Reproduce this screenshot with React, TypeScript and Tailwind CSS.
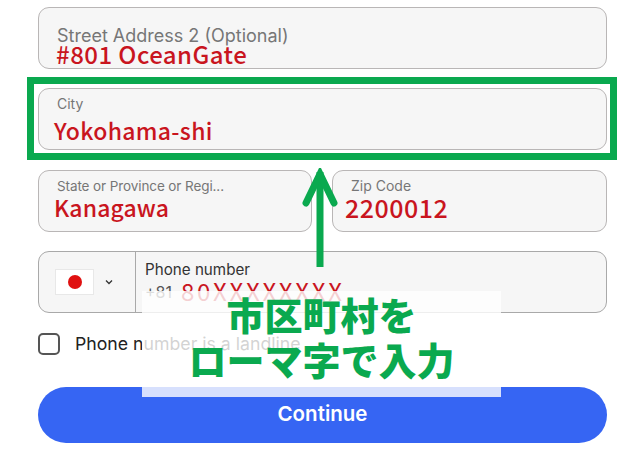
import React from "react";

const labelFont = "font-['Inter','Liberation_Sans',sans-serif]";
const markFont = "font-['Noto_Sans_CJK_JP','Noto_Sans',sans-serif]";

type FieldProps = {
  label: string;
  value: string;
  labelClass: string;
  valueClass: string;
  className?: string;
};

const Field: React.FC<FieldProps> = ({label, value, labelClass, valueClass, className}) => {
  return (
    <div className={`flex h-[62px] flex-col rounded-[11px] border border-[#b9b6b6] bg-[#f6f6f6] ${className ?? ""}`}>
      <p className={`${labelFont} whitespace-nowrap text-[#767676] ${labelClass}`}>{label}</p>
      <p className={`${markFont} whitespace-nowrap text-[#c9151e] ${valueClass}`}>{value}</p>
    </div>
  );
};

export default function App() {
  return (
    <div className="relative h-[459px] w-[640px] overflow-hidden bg-white">
      <div className="flex flex-col pt-[7px] pr-[33px] pl-[38px]">
        <Field
          label="Street Address 2 (Optional)"
          value="#801 OceanGate"
          labelClass="pt-[18px] pl-[18px] text-[18px] leading-[20px]"
          valueClass="-mt-[1px] pl-[17px] text-[24px] leading-[17px] tracking-[0.45px] font-medium"
        />
        <Field
          className="mt-[19px]"
          label="City"
          value="Yokohama-shi"
          labelClass="pt-[7px] pl-[18px] text-[14px] leading-[16px]"
          valueClass="pt-[3px] pl-[15px] text-[23px] leading-[30px] tracking-[0.3px] font-medium"
        />
        <div className="mt-[20px] flex gap-[20px]">
          <Field
            className="w-[274px]"
            label="State or Province or Regi..."
            value="Kanagawa"
            labelClass="pt-[7px] pl-[18px] text-[13.5px] leading-[16px] tracking-[-0.1px]"
            valueClass="pl-[15px] text-[23px] leading-[26px] tracking-[0.1px] font-medium"
          />
          <Field
            className="flex-1"
            label="Zip Code"
            value="2200012"
            labelClass="pt-[7px] pl-[18px] text-[14px] leading-[16px]"
            valueClass="pl-[12px] text-[25px] leading-[26px] tracking-[0.5px] font-medium"
          />
        </div>
        <div className="mt-[19px] flex h-[62px] rounded-[11px] border border-[#a9a9a9] bg-[#f6f6f6]">
          <div className="flex w-[97px] items-center border-r border-[#a9a9a9] pl-[16px]">
            <div className="flex h-[26px] w-[39px] items-center justify-center border border-[#e8e8e8] bg-white">
              <span className="size-[14px] rounded-full bg-[#e01010]" />
            </div>
            <svg className="ml-[11px] size-[8px]" viewBox="0 0 8 8" fill="none" stroke="#333" strokeWidth="1.3">
              <path d="M1 2.5 4 5.5 7 2.5" />
            </svg>
          </div>
          <div className="flex flex-col pt-[9px] pl-[9px]">
            <p className={`${labelFont} text-[15.2px] leading-[18px] text-[#333]`}>Phone number</p>
            <div className="flex items-center">
              <span className={`${labelFont} text-[16px] leading-[26px] text-[#555]`}>+81</span>
              <span className={`${markFont} ml-[9px] -translate-y-[1px] text-[24px] leading-[26px] tracking-[2.7px] text-[#c9151e]`}>80XXXXXXXX</span>
            </div>
          </div>
        </div>
        <label className="mt-[20px] flex h-[22px] items-center">
          <span className="size-[22px] rounded-[5px] border-2 border-[#555] bg-white" />
          <span className={`${labelFont} ml-[15px] text-[17.7px] leading-[22px] text-[#222]`}>Phone number is a landline</span>
        </label>
        <button className={`${labelFont} mt-[32px] h-[56px] w-full rounded-[28px] bg-[#3665f3] pb-[2px] text-[20.5px] font-semibold text-white`}>
          Continue
        </button>
      </div>

      {/* выделение поля City */}
      <div className="absolute top-[77px] left-[27px] h-[83px] w-[590px] border-[7px] border-[#0aa94f]" />

      {/* стрелка */}
      <svg className="absolute top-[168px] left-[302px]" width="36" height="100" viewBox="0 0 36 100" fill="none" stroke="#0aa94f" strokeWidth="7">
        <path d="M18 4V99" />
        <path d="M4 35 18 6 32 35" strokeLinecap="round" />
      </svg>

      {/* полупрозрачная плашка с подписью */}
      <div className="absolute top-[291px] left-[142px] flex h-[106px] w-[359px] flex-col items-center bg-white/80">
        <p className={`${markFont} text-[38px] leading-[46px] font-black whitespace-nowrap text-[#0aa94f]`}>市区町村を</p>
        <p className={`${markFont} -mt-[1px] text-[38px] leading-[46px] font-black whitespace-nowrap text-[#0aa94f]`}>ローマ字で入力</p>
      </div>
    </div>
  );
}
